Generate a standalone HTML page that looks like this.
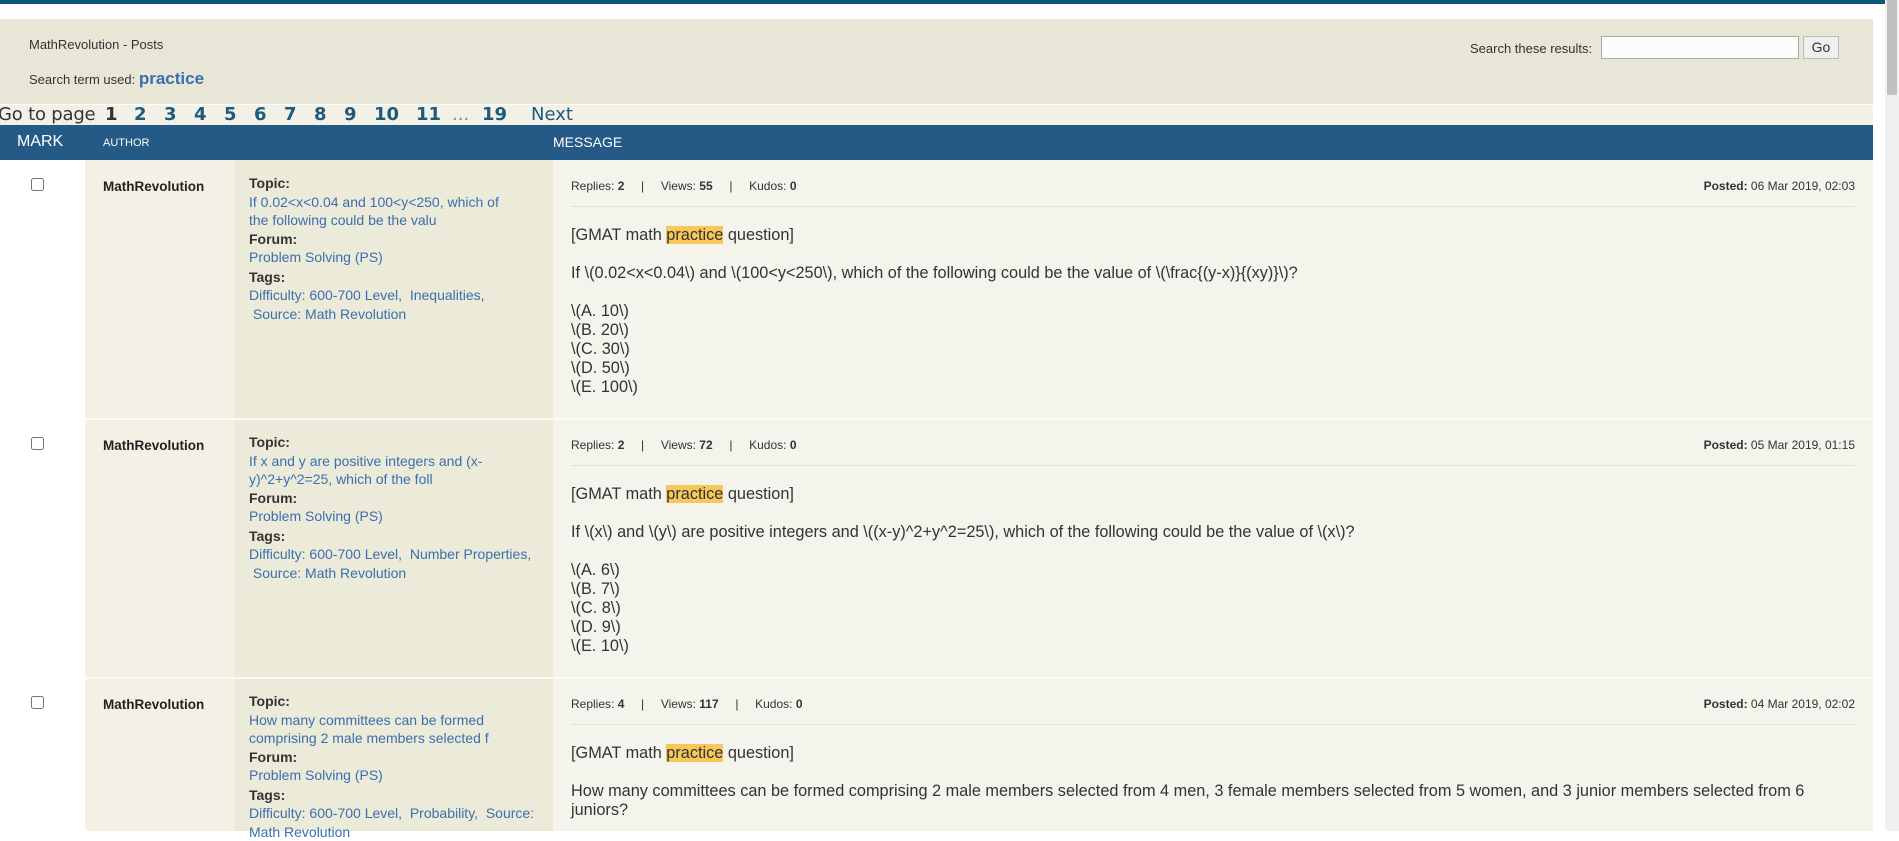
<!DOCTYPE html>
<html><head><meta charset="utf-8"><style>
*{margin:0;padding:0;box-sizing:border-box}
body{width:1899px;height:831px;overflow:hidden;background:#fff;font-family:"Liberation Sans",Tahoma,sans-serif;color:#333;position:relative}
.abs{position:absolute;white-space:nowrap}
.top{left:0;top:0;width:1885px;height:4px;background:#0e5676}
.panel{left:0;top:19px;width:1873px;height:85px;background:#e8e6d6}
.pag{left:0;top:104px;width:1873px;height:21px;background:#f3f1e6;border-top:1px solid #fff}
.hdr{left:0;top:125px;width:1873px;height:35px;background:#245a85;color:#fff}
.sb{left:1885px;top:0;width:14px;height:831px;background:#f0f0f0}
.thumb{left:1887px;top:0;width:10px;height:95px;background:#c1c1c1}
.pn{position:absolute;top:104px;font-size:18px;line-height:21px;font-family:'DejaVu Sans',sans-serif;font-weight:bold;color:#1d5a7d}
.col{position:absolute}
.lnk{color:#3a6fb0}
.lbl{font-weight:bold;color:#333}
.meta{font-size:12px;color:#333}
.msg{font-size:16px;color:#333}
.hl{background:#f7c75a}
input[type=checkbox]{width:13px;height:13px}
</style></head><body>
<div class="abs top"></div>
<div class="abs sb"></div><div class="abs thumb"></div>
<div class="abs panel"></div>
<div class="abs" style="left:29px;top:37px;font-size:13px">MathRevolution - Posts</div>
<div class="abs" style="left:29px;top:69px;font-size:13px">Search term used: <span style="color:#3a6fb0;font-weight:bold;font-size:17px">practice</span></div>
<div class="abs" style="left:1470px;top:41px;font-size:13px">Search these results:</div>
<div class="abs" style="left:1601px;top:36px;width:198px;height:23px;background:#fcfcfa;border:1px solid #aaa"></div>
<div class="abs" style="left:1803px;top:36px;width:36px;height:23px;background:#efefef;border:1px solid #bbb;font-size:14px;text-align:center;line-height:21px">Go</div>
<div class="abs pag"></div>
<div class="pn" style="left:-2px;font-weight:normal;color:#333;letter-spacing:-0.2px">Go to page</div>
<div class="pn" style="left:105px;color:#333">1</div>
<div class="pn" style="left:134px">2</div>
<div class="pn" style="left:164px">3</div>
<div class="pn" style="left:194px">4</div>
<div class="pn" style="left:224px">5</div>
<div class="pn" style="left:254px">6</div>
<div class="pn" style="left:284px">7</div>
<div class="pn" style="left:314px">8</div>
<div class="pn" style="left:344px">9</div>
<div class="pn" style="left:374px">10</div>
<div class="pn" style="left:416px">11</div>
<div class="pn" style="left:452px;font-weight:normal;color:#888">...</div>
<div class="pn" style="left:482px">19</div>
<div class="pn" style="left:531px;font-weight:normal">Next</div>
<div class="abs hdr"></div>
<div class="abs" style="left:17px;top:133px;font-size:16px;color:#fff">MARK</div>
<div class="abs" style="left:103px;top:137px;font-size:11px;color:#fff">AUTHOR</div>
<div class="abs" style="left:553px;top:134px;font-size:14px;color:#fff">MESSAGE</div>

<div class="col" style="left:85px;top:160px;width:150px;height:671px;background:#f3f1e6"></div>
<div class="col" style="left:235px;top:160px;width:318px;height:671px;background:#ecead9"></div>
<div class="col" style="left:553px;top:160px;width:1320px;height:671px;background:#f4f3ec"></div>
<div class="col" style="left:85px;top:418px;width:1788px;height:2px;background:#fbfaf4"></div>
<div class="col" style="left:85px;top:677px;width:1788px;height:2px;background:#fbfaf4"></div>

<!-- Row 1 -->
<div class="abs" style="left:31px;top:178px"><input type="checkbox"></div>
<div class="abs lbl" style="left:103px;top:179px;font-size:13.5px;color:#222">MathRevolution</div>
<div class="abs" style="left:249px;top:174px;font-size:14px;line-height:18.5px">
<div class="lbl">Topic:</div><div class="lnk">If 0.02&lt;x&lt;0.04 and 100&lt;y&lt;250, which of<br>the following could be the valu</div>
<div class="lbl">Forum:</div><div class="lnk">Problem Solving (PS)</div>
<div class="lbl" style="margin-top:1px">Tags:</div><div class="lnk">Difficulty: 600-700 Level,&nbsp; Inequalities,<br>&nbsp;Source: Math Revolution</div></div>
<div class="abs meta" style="left:571px;top:179px">Replies: <b>2</b> &nbsp;&nbsp;&nbsp;&nbsp;| &nbsp;&nbsp;&nbsp;&nbsp;Views: <b>55</b> &nbsp;&nbsp;&nbsp;&nbsp;| &nbsp;&nbsp;&nbsp;&nbsp;Kudos: <b>0</b></div>
<div class="abs meta" style="right:44px;top:179px"><b>Posted:</b> 06 Mar 2019, 02:03</div>
<div class="col" style="left:571px;top:206px;width:1284px;height:1px;background:#e4e2d6"></div>
<div class="abs msg" style="left:571px;top:226px;line-height:19px;font-size:16.3px">[GMAT math <span class="hl">practice</span> question]<br><br>If \(0.02&lt;x&lt;0.04\) and \(100&lt;y&lt;250\), which of the following could be the value of \(\frac{(y-x)}{(xy)}\)?<br><br>\(A. 10\)<br>\(B. 20\)<br>\(C. 30\)<br>\(D. 50\)<br>\(E. 100\)</div>

<!-- Row 2 -->
<div class="abs" style="left:31px;top:437px"><input type="checkbox"></div>
<div class="abs lbl" style="left:103px;top:438px;font-size:13.5px;color:#222">MathRevolution</div>
<div class="abs" style="left:249px;top:433px;font-size:14px;line-height:18.5px">
<div class="lbl">Topic:</div><div class="lnk">If x and y are positive integers and (x-<br>y)^2+y^2=25, which of the foll</div>
<div class="lbl">Forum:</div><div class="lnk">Problem Solving (PS)</div>
<div class="lbl" style="margin-top:1px">Tags:</div><div class="lnk">Difficulty: 600-700 Level,&nbsp; Number Properties,<br>&nbsp;Source: Math Revolution</div></div>
<div class="abs meta" style="left:571px;top:438px">Replies: <b>2</b> &nbsp;&nbsp;&nbsp;&nbsp;| &nbsp;&nbsp;&nbsp;&nbsp;Views: <b>72</b> &nbsp;&nbsp;&nbsp;&nbsp;| &nbsp;&nbsp;&nbsp;&nbsp;Kudos: <b>0</b></div>
<div class="abs meta" style="right:44px;top:438px"><b>Posted:</b> 05 Mar 2019, 01:15</div>
<div class="col" style="left:571px;top:465px;width:1284px;height:1px;background:#e4e2d6"></div>
<div class="abs msg" style="left:571px;top:485px;line-height:19px;font-size:16.3px">[GMAT math <span class="hl">practice</span> question]<br><br>If \(x\) and \(y\) are positive integers and \((x-y)^2+y^2=25\), which of the following could be the value of \(x\)?<br><br>\(A. 6\)<br>\(B. 7\)<br>\(C. 8\)<br>\(D. 9\)<br>\(E. 10\)</div>

<!-- Row 3 -->
<div class="abs" style="left:31px;top:696px"><input type="checkbox"></div>
<div class="abs lbl" style="left:103px;top:697px;font-size:13.5px;color:#222">MathRevolution</div>
<div class="abs" style="left:249px;top:692px;font-size:14px;line-height:18.5px">
<div class="lbl">Topic:</div><div class="lnk">How many committees can be formed<br>comprising 2 male members selected f</div>
<div class="lbl">Forum:</div><div class="lnk">Problem Solving (PS)</div>
<div class="lbl" style="margin-top:1px">Tags:</div><div class="lnk">Difficulty: 600-700 Level,&nbsp; Probability,&nbsp; Source:<br>Math Revolution</div></div>
<div class="abs meta" style="left:571px;top:697px">Replies: <b>4</b> &nbsp;&nbsp;&nbsp;&nbsp;| &nbsp;&nbsp;&nbsp;&nbsp;Views: <b>117</b> &nbsp;&nbsp;&nbsp;&nbsp;| &nbsp;&nbsp;&nbsp;&nbsp;Kudos: <b>0</b></div>
<div class="abs meta" style="right:44px;top:697px"><b>Posted:</b> 04 Mar 2019, 02:02</div>
<div class="col" style="left:571px;top:724px;width:1284px;height:1px;background:#e4e2d6"></div>
<div class="abs msg" style="left:571px;top:744px;line-height:19px;font-size:16.3px">[GMAT math <span class="hl">practice</span> question]<br><br>How many committees can be formed comprising 2 male members selected from 4 men, 3 female members selected from 5 women, and 3 junior members selected from 6<br>juniors?</div>
</body></html>
